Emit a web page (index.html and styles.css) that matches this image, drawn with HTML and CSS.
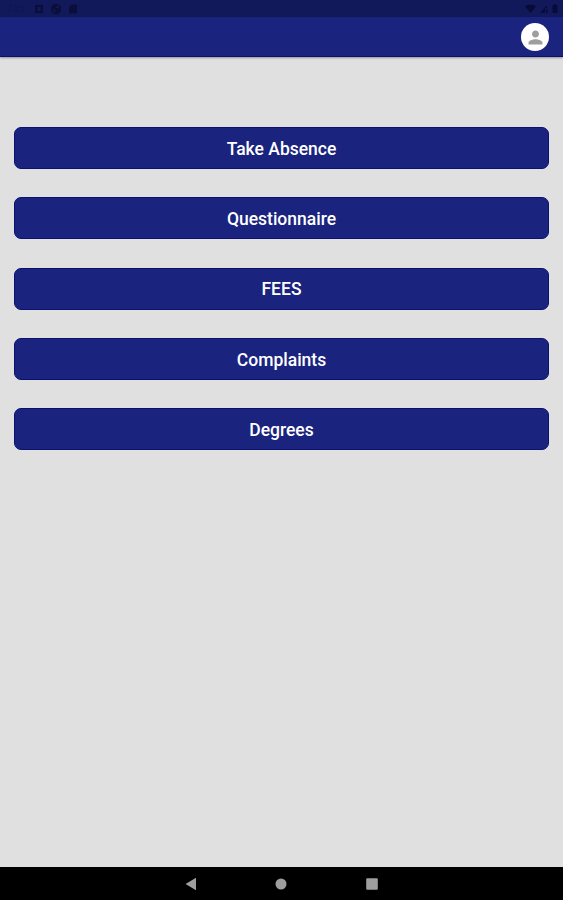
FILE: index.html
```html
<!DOCTYPE html>
<html lang="en">
<head>
    <meta charset="UTF-8">
    <meta name="viewport" content="width=device-width, initial-scale=1.0">
    <title>Home</title>
    <link rel="stylesheet" href="styles.css">
</head>
<body>
    <div class="status-bar">
        <div class="status-left">
            <span class="time">7:25</span>
            <svg width="10" height="10" viewBox="0 0 10 10">
                <path fill-rule="evenodd" d="M1 1h8v8H1zM3.5 3v4h3V3z"/>
            </svg>
            <svg width="12" height="12" viewBox="0 0 12 12">
                <path fill-rule="evenodd" d="M6 .8a5.2 5.2 0 1 0 0 10.4A5.2 5.2 0 0 0 6 .8zM6.5 2.4A3.6 3.6 0 0 1 9.4 5H6.5zM2.4 6.5h3v3a3.6 3.6 0 0 1-3-3z"/>
            </svg>
            <svg width="10" height="10" viewBox="0 0 10 10">
                <path d="M3.5 .5H9v9H1V3z"/>
            </svg>
        </div>
        <div class="status-right">
            <svg width="11" height="9" viewBox="0 0 11 9">
                <path d="M0 2.6a8 8 0 0 1 11 0L5.5 9z"/>
            </svg>
            <svg width="8" height="9" viewBox="0 0 8 9">
                <path d="M0 9l7-8v3H5v5zM6 5h1.5v4H6z"/>
            </svg>
            <svg width="6" height="9" viewBox="0 0 6 9">
                <path d="M2 0h2v1h1.5v8h-5V1H2z"/>
            </svg>
        </div>
    </div>

    <header class="app-bar">
        <button class="avatar" aria-label="Profile">
            <svg width="21" height="21" viewBox="0 0 24 24">
                <path d="M12 12c2.21 0 4-1.79 4-4s-1.79-4-4-4-4 1.79-4 4 1.79 4 4 4zm0 2c-2.67 0-8 1.34-8 4v2h16v-2c0-2.66-5.33-4-8-4z"/>
            </svg>
        </button>
    </header>

    <main class="menu">
        <button class="menu-button">Take Absence</button>
        <button class="menu-button">Questionnaire</button>
        <button class="menu-button">FEES</button>
        <button class="menu-button">Complaints</button>
        <button class="menu-button">Degrees</button>
    </main>

    <nav class="nav-bar">
        <svg width="12" height="14" viewBox="0 0 12 14">
            <path d="M.5 7L11 .8v12.4z"/>
        </svg>
        <svg width="12" height="12" viewBox="0 0 12 12">
            <circle cx="6" cy="6" r="5.5"/>
        </svg>
        <svg width="12" height="12" viewBox="0 0 12 12">
            <rect x=".2" y=".2" width="11.6" height="11.6" rx="1"/>
        </svg>
    </nav>
</body>
</html>
```
FILE: styles.css
```css
* {
    margin: 0;
    padding: 0;
    box-sizing: border-box;
}

body {
    font-family: Roboto, "Liberation Sans", sans-serif;
    background-color: #e0e0e0;
    height: 100vh;
    display: flex;
    flex-direction: column;
    overflow: hidden;
}

svg {
    display: block;
}

button {
    border: none;
    font-family: inherit;
    cursor: pointer;
}

.status-bar {
    height: 17px;
    padding: 0 5px 0 7px;
    background-color: #12195b;
    display: flex;
    justify-content: space-between;
    align-items: center;
}

.status-left {
    display: flex;
    align-items: center;
    gap: 6px;
    fill: #0a0e3a;
}

.time {
    width: 21px;
    font-size: 9px;
    color: #0e1450;
}

.status-right {
    display: flex;
    align-items: center;
    gap: 4px;
    fill: #070b38;
}

.app-bar {
    height: 39.5px;
    padding: 0 14px;
    background-color: #1a237e;
    border-bottom: 1px solid #0c1068;
    box-shadow: 0 1px 2px rgba(0, 0, 40, 0.35);
    display: flex;
    justify-content: flex-end;
    align-items: center;
}

.avatar {
    width: 28px;
    height: 28px;
    margin-top: 1.5px;
    border-radius: 50%;
    background-color: white;
    fill: #9e9e9e;
    display: flex;
    justify-content: center;
    align-items: center;
}

.menu {
    flex: 1;
    padding: 70.7px 14px 0;
    display: flex;
    flex-direction: column;
    gap: 28.3px;
}

.menu-button {
    height: 42px;
    padding-top: 1px;
    border: 1px solid #0c1070;
    border-radius: 7px;
    background-color: #1a237e;
    color: white;
    font-size: 17.5px;
    font-weight: 500;
}

.nav-bar {
    height: 33px;
    padding-right: 1px;
    background-color: black;
    fill: #9e9e9e;
    display: flex;
    justify-content: center;
    align-items: center;
    gap: 78.5px;
}
```
